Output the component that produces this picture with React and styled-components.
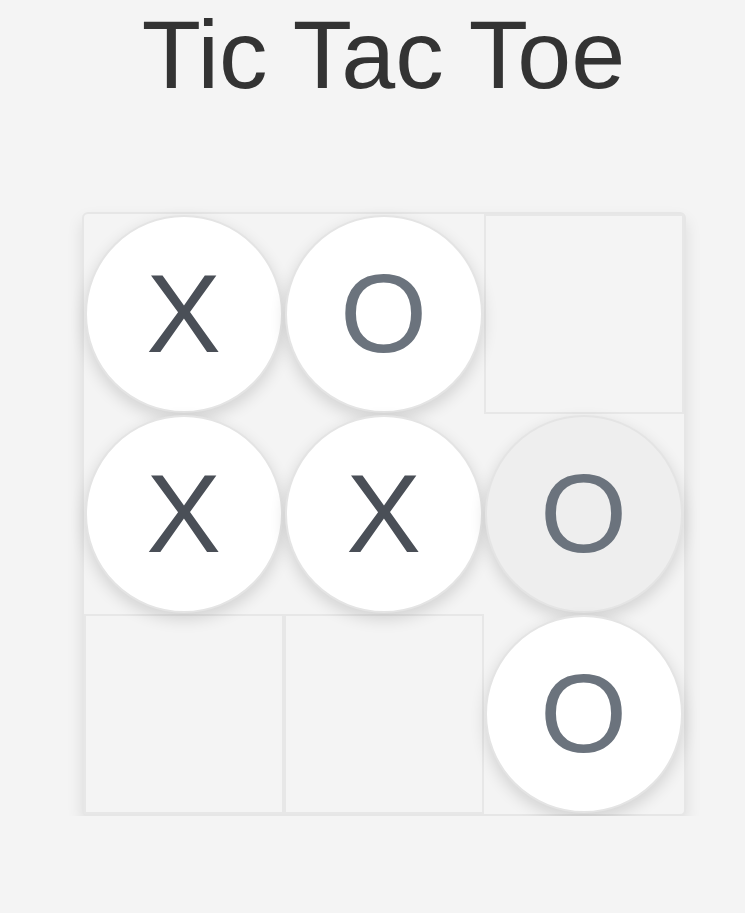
import React from 'react';
import styled, {createGlobalStyle} from 'styled-components';

const board = ['X', 'O', null, 'X', 'X', 'O', null, null, 'O'];
const highlighted = 5;

export default function App() {
  return (
    <>
      <GlobalStyle />
      <Page>
        <Title>Tic Tac Toe</Title>
        <Board>
          {board.map((mark, i) =>
            mark ? (
              <Cell key={i}>
                <Piece mark={mark} $active={i === highlighted}>{mark}</Piece>
              </Cell>
            ) : (
              <EmptyCell key={i} />
            )
          )}
        </Board>
      </Page>
    </>
  );
}

const GlobalStyle = createGlobalStyle`
  html, body {
    margin: 0;
    padding: 0;
    background: #f4f4f4;
  }
  body {
    font-family: "Liberation Sans", Arial, sans-serif;
  }
`;

const Page = styled.div`
  display: flex;
  flex-direction: column;
  align-items: center;
  width: 605px;
  margin-left: 81px;
`;

const Title = styled.h1`
  margin: 0;
  height: 212px;
  font-size: 97px;
  font-weight: normal;
  line-height: 110px;
  color: #333;
`;

const Board = styled.div`
  display: grid;
  grid-template-columns: repeat(3, 200px);
  grid-template-rows: repeat(3, 200px);
  border: 2px solid #e6e6e6;
  border-radius: 6px;
  background: #f4f4f4;
  box-shadow: 0 8px 16px rgba(0, 0, 0, 0.1);
`;

const Cell = styled.div`
  display: flex;
  align-items: center;
  justify-content: center;
  width: 200px;
  height: 200px;
`;

const EmptyCell = styled.div`
  box-sizing: border-box;
  width: 200px;
  height: 200px;
  border: 2px solid #e7e7e7;
  background: #f4f4f4;
`;

const Piece = styled.div`
  box-sizing: border-box;
  display: flex;
  align-items: center;
  justify-content: center;
  width: 198px;
  height: 198px;
  border-radius: 50%;
  border: 2px solid #e4e4e4;
  background: ${(p) => (p.$active ? '#eeeeee' : '#ffffff')};
  box-shadow: 0 6px 16px rgba(0, 0, 0, 0.14);
  font-size: 112px;
  line-height: 1;
  color: ${(p) => (p.mark === 'X' ? '#4a4f57' : '#6b737d')};
  position: relative;
  z-index: 1;
`;
